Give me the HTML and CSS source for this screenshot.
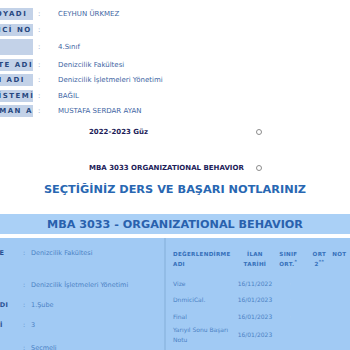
FILE: index.html
```html
<!DOCTYPE html>
<html lang="tr">
<head>
    <meta charset="UTF-8">
    <title>Ders ve Başarı Notları</title>
    <link rel="stylesheet" href="styles.css">
</head>
<body>
    <div class="info">
        <div class="info-row"><div class="info-label">ADI SOYADI</div><div class="info-colon">:</div><div class="info-value">CEYHUN ÜRKMEZ</div></div>
        <div class="info-row"><div class="info-label">ÖĞRENCİ NO</div><div class="info-colon">:</div><div class="info-value"></div></div>
        <div class="info-row tall"><div class="info-label"></div><div class="info-colon">:</div><div class="info-value">4.Sınıf</div></div>
        <div class="info-row"><div class="info-label">FAKÜLTE ADI</div><div class="info-colon">:</div><div class="info-value">Denizcilik Fakültesi</div></div>
        <div class="info-row"><div class="info-label">BÖLÜM ADI</div><div class="info-colon">:</div><div class="info-value">Denizcilik İşletmeleri Yönetimi</div></div>
        <div class="info-row"><div class="info-label">NOT SİSTEMİ</div><div class="info-colon">:</div><div class="info-value">BAĞIL</div></div>
        <div class="info-row"><div class="info-label">DANIŞMAN ADI</div><div class="info-colon">:</div><div class="info-value">MUSTAFA SERDAR AYAN</div></div>
    </div>

    <div class="select-row first">
        <span class="select-text">2022-2023 Güz</span>
        <span class="radio"></span>
    </div>
    <div class="select-row">
        <span class="select-text">MBA 3033 ORGANIZATIONAL BEHAVIOR</span>
        <span class="radio"></span>
    </div>

    <h2 class="title">SEÇTİĞİNİZ DERS VE BAŞARI NOTLARINIZ</h2>

    <div class="course-bar">MBA 3033 - ORGANIZATIONAL BEHAVIOR</div>

    <div class="panel">
        <div class="panel-left">
            <div class="course-row r1"><div class="course-label">FAKÜLTE</div><div class="course-colon">:</div><div class="course-value">Denizcilik Fakültesi</div></div>
            <div class="course-row r2"><div class="course-label">BÖLÜM</div><div class="course-colon">:</div><div class="course-value">Denizcilik İşletmeleri Yönetimi</div></div>
            <div class="course-row"><div class="course-label">ŞUBE ADI</div><div class="course-colon">:</div><div class="course-value">1.Şube</div></div>
            <div class="course-row r4"><div class="course-label">KREDİSİ</div><div class="course-colon">:</div><div class="course-value">3</div></div>
            <div class="course-row"><div class="course-label">TÜRÜ</div><div class="course-colon">:</div><div class="course-value">Seçmeli</div></div>
        </div>
        <div class="panel-right">
            <table class="grades">
                <tr class="grades-head">
                    <th class="col-name">DEĞERLENDİRME<br>ADI</th>
                    <th class="col-date">İLAN<br>TARİHİ</th>
                    <th class="col-avg">SINIF<br>ORT.<sup>*</sup></th>
                    <th class="col-avg2">ORT<br>2<sup>**</sup></th>
                    <th class="col-note">NOT</th>
                </tr>
                <tr>
                    <td class="col-name">Vize</td>
                    <td class="col-date">16/11/2022</td>
                    <td class="col-avg faint">·</td>
                    <td class="col-avg2"></td>
                    <td class="col-note"></td>
                </tr>
                <tr>
                    <td class="col-name">DnmiciCal.</td>
                    <td class="col-date">16/01/2023</td>
                    <td class="col-avg faint">·</td>
                    <td class="col-avg2"></td>
                    <td class="col-note"></td>
                </tr>
                <tr>
                    <td class="col-name">Final</td>
                    <td class="col-date">16/01/2023</td>
                    <td class="col-avg faint">·</td>
                    <td class="col-avg2"></td>
                    <td class="col-note"></td>
                </tr>
                <tr class="two-line">
                    <td class="col-name">Yarıyıl Sonu Başarı Notu</td>
                    <td class="col-date">16/01/2023</td>
                    <td class="col-avg"></td>
                    <td class="col-avg2"></td>
                    <td class="col-note"></td>
                </tr>
            </table>
        </div>
    </div>
</body>
</html>
```

FILE: styles.css
```css
body {
    margin: 0;
    padding-top: 8px;
    font-family: "DejaVu Sans", Verdana, sans-serif;
    background-color: #fff;
    overflow: hidden;
}
.info {
    display: flex;
    flex-direction: column;
    gap: 3.5px;
    margin-left: -40px;
}
.info-row {
    display: flex;
    align-items: center;
    height: 12px;
}
.info-row.tall {
    height: 16px;
}
.info-label {
    width: 66px;
    height: 100%;
    padding-left: 7px;
    display: flex;
    align-items: center;
    background-color: #c3d2e8;
    color: #27477f;
    font-size: 7px;
    font-weight: bold;
    letter-spacing: 1.5px;
    white-space: nowrap;
    overflow: hidden;
}
.info-colon {
    width: 25px;
    padding-left: 5px;
    box-sizing: border-box;
    color: #7a93bd;
    font-size: 7px;
}
.info-value {
    color: #3e65a3;
    font-size: 7px;
    white-space: nowrap;
}
.select-row {
    display: flex;
    align-items: center;
    padding-left: 89px;
    height: 10px;
}
.select-row.first {
    margin-top: 10px;
}
.select-row + .select-row {
    margin-top: 26px;
}
.select-text {
    width: 167px;
    color: #1c1c58;
    font-size: 7px;
    font-weight: bold;
}
.radio {
    width: 4px;
    height: 4px;
    border: 1px solid #8c8c8c;
    border-radius: 50%;
}
.title {
    margin: 9px 0 0;
    text-align: center;
    color: #2867b2;
    font-size: 11.3px;
    font-weight: bold;
    line-height: 16px;
}
.course-bar {
    margin-top: 16px;
    height: 20px;
    line-height: 21px;
    text-align: center;
    background-color: #aad0f6;
    color: #2961ad;
    font-size: 11.2px;
    font-weight: bold;
    border-bottom: 4px solid #fff;
}
.panel {
    display: flex;
    height: 200px;
    background-color: #a1caf4;
}
.panel-left {
    width: 164px;
    flex-shrink: 0;
    padding-top: 11px;
    border-right: 2px solid #92bce6;
    overflow: hidden;
}
.course-row {
    display: flex;
    height: 20px;
    margin-left: -30px;
    font-size: 6.5px;
}
.course-row.r1 {
    height: 32px;
}
.course-row.r4 {
    height: 23px;
}
.course-label {
    width: 53px;
    color: #2a5394;
    font-weight: bold;
    letter-spacing: 0.5px;
    white-space: nowrap;
    overflow: hidden;
}
.course-colon {
    width: 8px;
    color: #5588c4;
}
.course-value {
    color: #4c82c4;
    white-space: nowrap;
}
.panel-right {
    flex: 1;
    padding-left: 7px;
    padding-top: 11px;
}
.grades {
    border-collapse: collapse;
    table-layout: fixed;
    font-size: 6px;
}
.grades th {
    height: 26px;
    padding: 0;
    color: #3570ba;
    font-size: 5.6px;
    font-weight: bold;
    text-align: center;
    vertical-align: top;
    line-height: 10px;
    letter-spacing: 0.3px;
}
.grades th.col-name {
    text-align: left;
}
.grades th sup {
    font-size: 4.5px;
    line-height: 0;
}
.grades td {
    height: 16.5px;
    padding: 0;
    color: #4c82c4;
    vertical-align: middle;
}
.grades .two-line td {
    height: 20px;
    line-height: 10px;
}
.grades .col-name {
    width: 57px;
    text-align: left;
}
.grades .col-date {
    width: 58px;
    text-align: center;
}
.grades .col-avg {
    width: 28px;
    text-align: left;
}
.grades .col-avg2 {
    width: 24px;
    text-align: center;
}
.grades .col-note {
    width: 20px;
    text-align: left;
    padding-left: 3px;
}
.grades .faint {
    color: #b3d3f3;
    padding-left: 10px;
}
```
